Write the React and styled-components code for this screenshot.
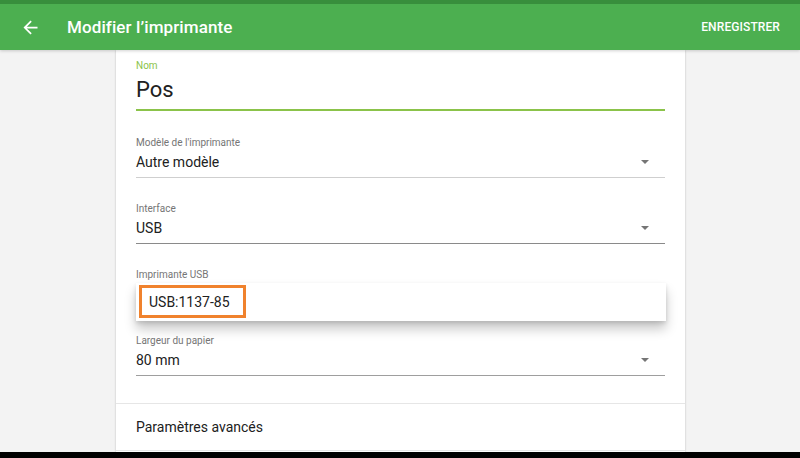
import styled, { createGlobalStyle } from "styled-components";

const GlobalStyle = createGlobalStyle`
  html, body {
    margin: 0;
    padding: 0;
    background: #f3f3f3;
    font-family: Roboto, "Noto Sans", Arial, sans-serif;
  }
  * { box-sizing: border-box; }
`;

const Page = styled.div`
  width: 800px;
  height: 458px;
  display: flex;
  flex-direction: column;
  background: #f3f3f3;
  overflow: hidden;
`;

const AppBar = styled.header`
  height: 50px;
  border-top: 4px solid #388e3c;
  background: #4caf50;
  display: flex;
  align-items: center;
  padding: 0 20px 0 20px;
  color: #fff;
  position: relative;
  z-index: 2;
  box-shadow: 0 1px 3px rgba(0, 0, 0, 0.18);
`;

const BackButton = styled.div`
  width: 21px;
  height: 21px;
  display: flex;
  align-items: center;
  justify-content: center;
  margin-right: 26px;
`;

const Title = styled.h1`
  flex: 1;
  margin: 0;
  font-size: 17px;
  font-weight: 500;
  letter-spacing: 0.1px;
`;

const Action = styled.span`
  font-size: 12px;
  font-weight: 500;
  letter-spacing: 0.1px;
`;

const Body = styled.main`
  flex: 1;
  display: flex;
  justify-content: center;
  overflow: hidden;
  padding-left: 1px;
`;

const Card = styled.section`
  width: 569px;
  background: #fff;
  box-shadow: 0 0 2px rgba(0, 0, 0, 0.22);
  display: flex;
  flex-direction: column;
`;

const Form = styled.div`
  padding: 10px 20px 27px;
  position: relative;
`;

const Field = styled.div`
  margin-top: ${(p) => p.$gap ?? 25}px;
  position: relative;
`;

const Label = styled.div`
  font-size: 10px;
  line-height: 12px;
  color: ${(p) => (p.$active ? "#8bc34a" : "#757575")};
  margin-bottom: ${(p) => (p.$active ? "4px" : "3px")};
`;

const NameValue = styled.div`
  font-size: 22px;
  line-height: 28px;
  color: #212121;
  padding-bottom: 5px;
  border-bottom: 2px solid #8bc34a;
`;

const SelectRow = styled.div`
  display: flex;
  align-items: center;
  justify-content: space-between;
  height: 25px;
  font-size: 14px;
  line-height: 20px;
  color: #212121;
  padding-bottom: 5px;
  border-bottom: 1px solid ${(p) => p.$line || "#c8c8c8"};
  box-sizing: content-box;
  height: 20px;
`;

const Caret = styled.span`
  width: 0;
  height: 0;
  border-left: 4px solid transparent;
  border-right: 4px solid transparent;
  border-top: 4px solid #757575;
  margin-right: 16px;
`;

const Popup = styled.div`
  position: absolute;
  left: 0;
  right: -1px;
  top: 14px;
  height: 38px;
  background: #fff;
  box-shadow: 0 8px 12px rgba(0, 0, 0, 0.22), 0 2px 4px rgba(0, 0, 0, 0.12);
  z-index: 1;
  padding: 2px 0 0 3px;
`;

const Highlight = styled.div`
  width: 107px;
  height: 33px;
  border: 3px solid #f0822d;
  font-size: 14px;
  color: #212121;
  display: flex;
  align-items: center;
  padding-left: 7px;
`;

const Divider = styled.hr`
  margin: 0;
  border: 0;
  border-top: 1px solid #e6e6e6;
`;

const Row = styled.div`
  height: 46px;
  display: flex;
  align-items: center;
  padding: 0 20px;
  font-size: 14px;
  color: #212121;
`;

const NavBar = styled.div`
  height: 6px;
  background: #000;
`;

function ArrowBack() {
  return (
    <svg width="21" height="21" viewBox="0 0 24 24" fill="#fff">
      <path d="M20 11H7.83l5.59-5.59L12 4l-8 8 8 8 1.41-1.41L7.83 13H20v-2z" />
    </svg>
  );
}

function Select({ label, value, line, gap }) {
  return (
    <Field $gap={gap}>
      <Label>{label}</Label>
      <SelectRow $line={line}>
        <span>{value}</span>
        <Caret />
      </SelectRow>
    </Field>
  );
}

export default function App() {
  return (
    <>
      <GlobalStyle />
      <Page>
        <AppBar>
          <BackButton>
            <ArrowBack />
          </BackButton>
          <Title>Modifier l’imprimante</Title>
          <Action>ENREGISTRER</Action>
        </AppBar>
        <Body>
          <Card>
            <Form>
              <Field $gap={0}>
                <Label $active>Nom</Label>
                <NameValue>Pos</NameValue>
              </Field>
              <Select gap={26} label="Modèle de l'imprimante" value="Autre modèle" line="#cfcfcf" />
              <Select label="Interface" value="USB" line="#8a8a8a" />
              <Field>
                <Label>Imprimante USB</Label>
                <SelectRow $line="#c8c8c8">
                  <span />
                  <Caret />
                </SelectRow>
                <Popup>
                  <Highlight>USB:1137-85</Highlight>
                </Popup>
              </Field>
              <Select label="Largeur du papier" value="80 mm" line="#9e9e9e" />
            </Form>
            <Divider />
            <Row>Paramètres avancés</Row>
            <Divider />
          </Card>
        </Body>
        <NavBar />
      </Page>
    </>
  );
}
